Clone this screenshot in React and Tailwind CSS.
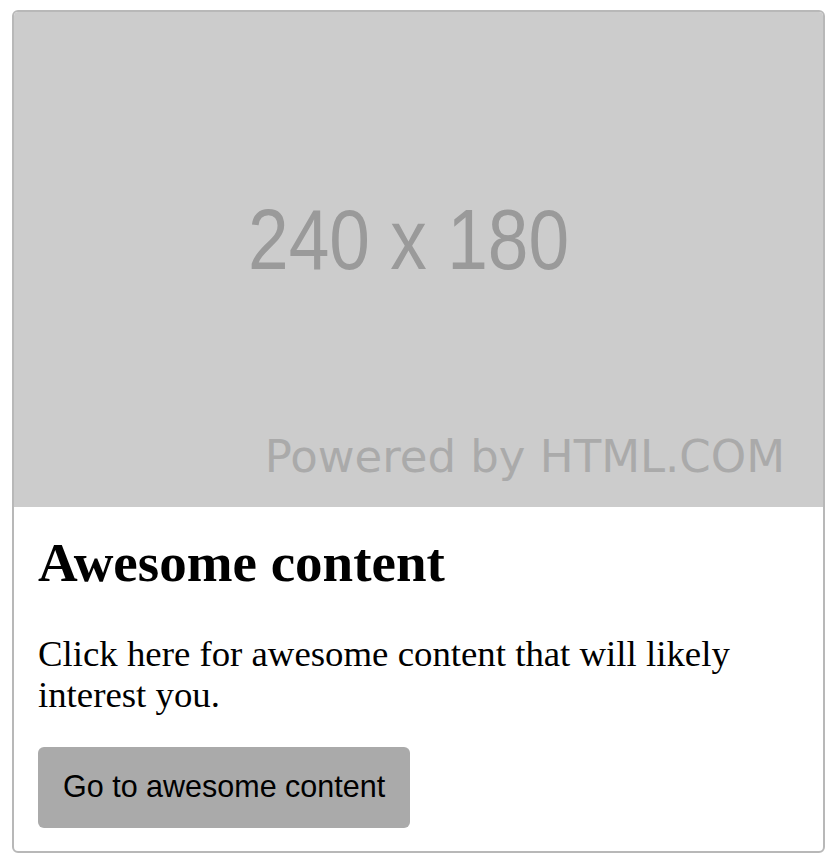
export default function App() {
  return (
    <div className="min-h-screen bg-white pt-[10px] pl-[12px]">
      <div className="w-[813px] h-[843px] border-2 border-[#b8b8b8] rounded-[6px] overflow-hidden bg-white flex flex-col">
        {/* Placeholder image */}
        <div className="h-[495px] bg-[#cccccc] relative shrink-0">
          <div className="absolute left-[234px] top-[184px] text-[86px] leading-none text-[#9a9a9a] font-['Liberation_Sans',Arial,sans-serif] scale-x-[0.85] origin-left whitespace-nowrap">
            240 x 180
          </div>
          <div className="absolute right-[38px] bottom-[28px] text-[45px] leading-none text-[#aaaaaa] font-['DejaVu_Sans',Verdana,sans-serif] whitespace-nowrap">
            Powered by HTML.COM
          </div>
        </div>

        {/* Body */}
        <div className="px-[24px] pt-[15px] pb-[24px] flex flex-col items-start">
          <h2 className="text-[55px] font-bold text-black leading-normal font-['Liberation_Serif','Times_New_Roman',serif]">
            Awesome content
          </h2>
          <p className="mt-[28px] text-[36.8px] leading-[41px] text-black font-['Liberation_Serif','Times_New_Roman',serif]">
            Click here for awesome content that will likely interest you.
          </p>
          <button className="mt-[32px] h-[81px] px-[25px] bg-[#aaaaaa] rounded-[6px] text-[30.5px] text-black font-['Liberation_Sans',Arial,sans-serif]">
            Go to awesome content
          </button>
        </div>
      </div>
    </div>
  );
}
